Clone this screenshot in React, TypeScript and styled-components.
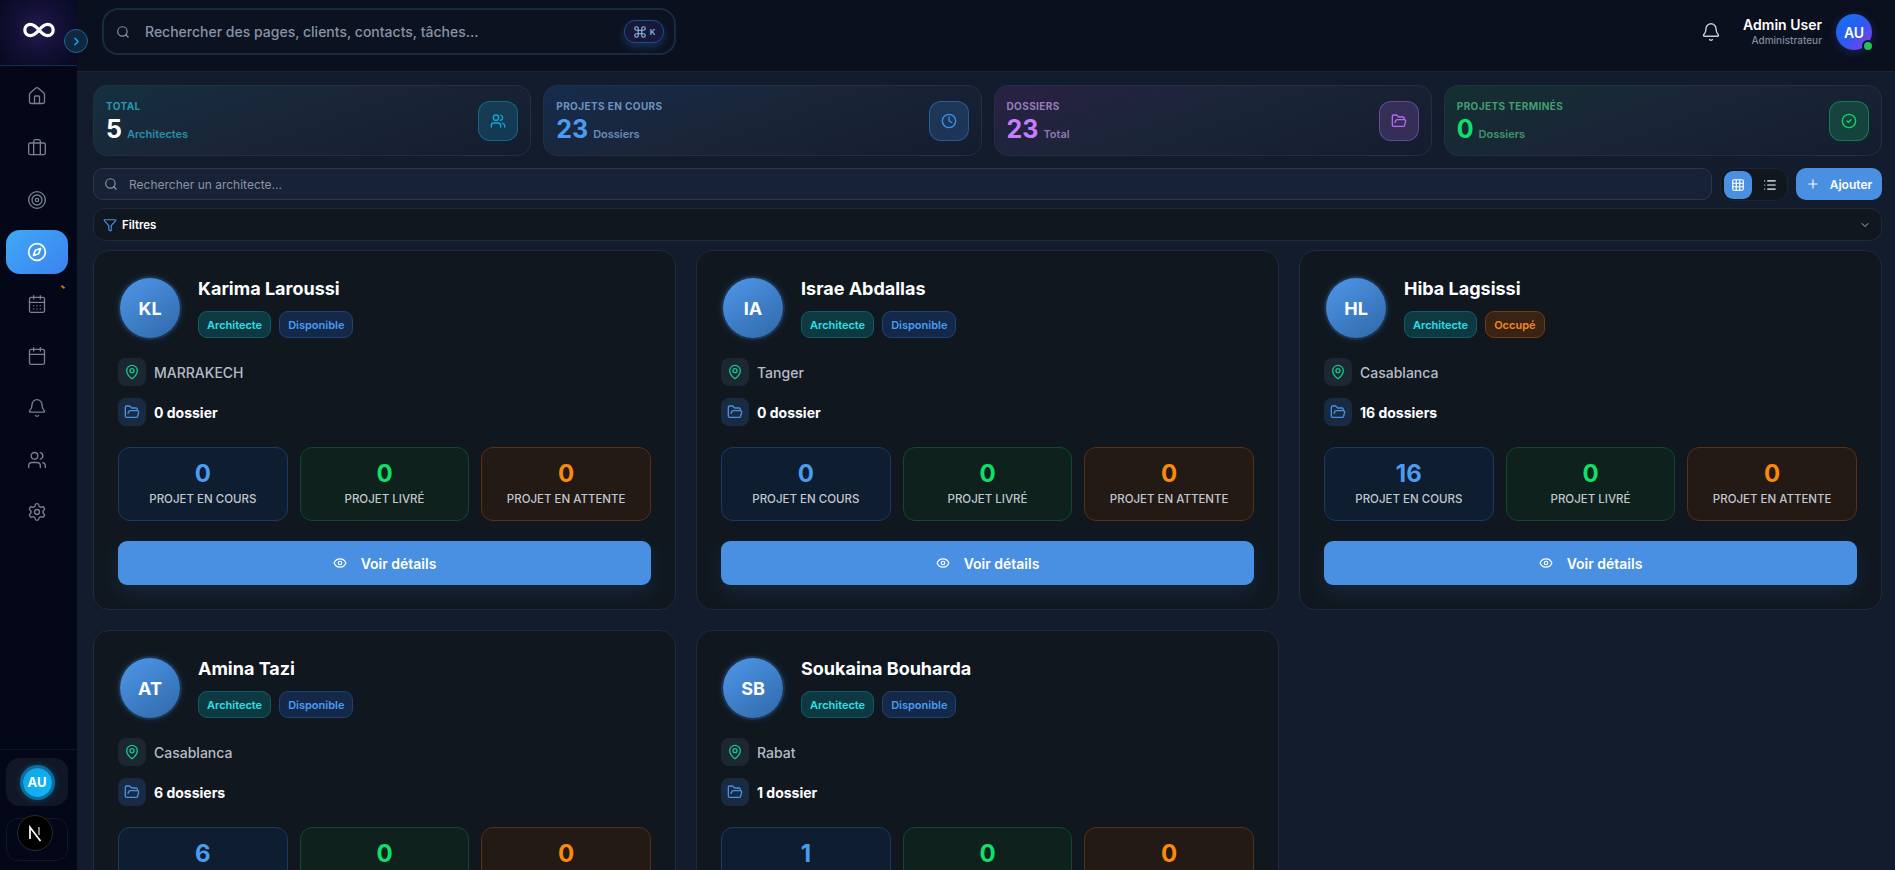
import React from "react";
import styled, { createGlobalStyle } from "styled-components";
import {
  House, Briefcase, Target, Compass, CalendarDays, Calendar, Bell, Users, Settings, Search,
  Command, Funnel, ChevronDown, ChevronRight, Grid3x3, List, Plus, Eye, MapPin, FolderOpen,
  Clock, CircleCheck, Infinity as InfinityIcon,
} from "lucide-react";

const Global = createGlobalStyle`
  html, body { margin: 0; padding: 0; height: 100%; overflow: hidden; background: #121c2c; }
  body { font-family: Inter, "Liberation Sans", sans-serif; color: #fff; }
  * { box-sizing: border-box; }
`;

const Shell = styled.div`
  position: relative;
  display: flex;
  width: 100vw;
  height: 100vh;
  overflow: hidden;
`;

const Side = styled.aside`
  width: 77px;
  flex: none;
  display: flex;
  flex-direction: column;
  background: #030717;
`;

const LogoArea = styled.div`
  height: 66px;
  flex: none;
  display: flex;
  align-items: center;
  justify-content: center;
  padding-bottom: 6px;
  border-bottom: 1px solid #14304c;
  background: radial-gradient(circle at 50% 45%, #221c4e 0%, #110f33 50%, #060a20 100%);
`;

const Toggle = styled.div`
  position: absolute;
  left: 64px;
  top: 29px;
  width: 24px;
  height: 24px;
  border-radius: 50%;
  display: flex;
  align-items: center;
  justify-content: center;
  color: #12b0f5;
  background: #10283f;
  border: 1px solid #1b6596;
`;

const Nav = styled.nav`
  flex: 1;
  display: flex;
  flex-direction: column;
  padding-top: 8px;
  gap: 8px;
`;

const NavItem = styled.div<{ $active?: boolean }>`
  position: relative;
  height: 44px;
  margin: 0 9px 0 6px;
  display: flex;
  align-items: center;
  justify-content: center;
  border-radius: 14px;
  color: ${(p) => (p.$active ? "#fff" : "#7b808c")};
  background: ${(p) => (p.$active ? "linear-gradient(135deg, #3fa9f5, #3b82f0)" : "transparent")};
`;

const Spark = styled.span`
  position: absolute;
  left: 55px;
  top: 4px;
  width: 4px;
  height: 2px;
  background: #d9730d;
  transform: rotate(40deg);
`;

const SideFoot = styled.div`
  flex: none;
  border-top: 1px solid #0f1626;
  padding: 8px 9px 9px 6px;
  display: flex;
  flex-direction: column;
  gap: 12px;
`;

const UserBox = styled.div`
  height: 48px;
  border-radius: 14px;
  background: #111726;
  display: flex;
  align-items: center;
  justify-content: center;
`;

const UserDot = styled.div`
  width: 29px;
  height: 29px;
  border-radius: 50%;
  background: linear-gradient(135deg, #0ea5e9, #12b5f5);
  box-shadow: 0 0 0 3px #0a6f9e, 0 0 6px 3px rgba(14, 165, 233, 0.3);
  display: flex;
  align-items: center;
  justify-content: center;
  font-size: 13px;
  font-weight: 700;
`;

const NextBox = styled.div`
  position: relative;
  height: 43px;
  border-radius: 12px;
  border: 1px solid #111827;
`;

const NextMark = styled.div`
  position: absolute;
  left: 10px;
  top: -4px;
  width: 36px;
  height: 36px;
  border-radius: 50%;
  background: #000;
  border: 1px solid #2b2b2b;
  display: flex;
  align-items: center;
  justify-content: center;
`;

const Main = styled.div`
  flex: 1;
  min-width: 0;
  display: flex;
  flex-direction: column;
`;

const Top = styled.header`
  height: 72px;
  flex: none;
  display: flex;
  align-items: flex-start;
  justify-content: space-between;
  padding: 8px 23px 0 25px;
  background: #0b101e;
  border-bottom: 1px solid #1b2536;
`;

const GlobalSearch = styled.div`
  width: 574px;
  height: 47px;
  display: flex;
  align-items: center;
  padding: 0 10px 0 12px;
  border-radius: 16px;
  border: 2px solid #1a2b40;
  background: #0c1220;
  color: #8893a5;
`;

const GlobalPlaceholder = styled.span`
  flex: 1;
  margin-left: 15px;
  font-size: 14px;
  font-weight: 500;
`;

const Kbd = styled.div`
  width: 40px;
  height: 23px;
  display: flex;
  align-items: center;
  justify-content: center;
  gap: 3px;
  border-radius: 11px;
  border: 1px solid #1f4a86;
  background: #161a38;
  color: #8fb4e6;
  font-size: 8px;
  font-weight: 600;
  box-shadow: 0 4px 9px rgba(59, 130, 246, 0.28);
`;

const TopRight = styled.div`
  display: flex;
  align-items: center;
  height: 48px;
`;

const BellWrap = styled.div`
  color: #c6ccd6;
  display: flex;
  margin-right: 22px;
`;

const UserText = styled.div`
  display: flex;
  flex-direction: column;
  align-items: flex-end;
  margin: -2px 14px 0 0;
`;

const UserName = styled.div`
  font-size: 14px;
  line-height: 18px;
  font-weight: 600;
`;

const UserRole = styled.div`
  font-size: 10px;
  line-height: 13px;
  font-weight: 500;
  color: #808a9c;
`;

const TopAvatar = styled.div`
  position: relative;
  width: 36px;
  height: 36px;
  border-radius: 50%;
  display: flex;
  align-items: center;
  justify-content: center;
  font-size: 14px;
  font-weight: 600;
  background: linear-gradient(135deg, #1473f0 0%, #2a5cf0 50%, #9333ea 100%);
  box-shadow: 0 2px 10px rgba(59, 80, 240, 0.3);
`;

const OnlineDot = styled.span`
  position: absolute;
  right: -2px;
  bottom: -2px;
  width: 12px;
  height: 12px;
  border-radius: 50%;
  background: #1fbf62;
  border: 2px solid #0b101e;
`;

const Content = styled.main`
  flex: 1;
  min-height: 0;
  overflow: hidden;
  padding: 13px 13px 0 16px;
  background: #121c2c;
`;

const StatRow = styled.section`
  display: grid;
  grid-template-columns: repeat(4, 1fr);
  gap: 12px;
`;

const StatCard = styled.div<{ $tint: string }>`
  height: 71px;
  display: flex;
  align-items: center;
  justify-content: space-between;
  padding: 0 12px 0 12px;
  border-radius: 14px;
  border: 1px solid #232f42;
  background: linear-gradient(160deg, ${(p) => p.$tint} 0%, #1a2538 45%, #141d2f 100%);
`;

const StatText = styled.div`
  padding-top: 3px;
`;

const StatLabel = styled.div<{ $c: string }>`
  font-size: 10px;
  line-height: 12px;
  font-weight: 700;
  letter-spacing: 0.4px;
  text-transform: uppercase;
  color: ${(p) => p.$c};
  opacity: 0.85;
`;

const StatLine = styled.div`
  display: flex;
  align-items: baseline;
  gap: 5px;
  margin-top: 2px;
`;

const StatNum = styled.span<{ $c: string }>`
  font-size: 25px;
  line-height: 30px;
  font-weight: 700;
  color: ${(p) => p.$c};
`;

const StatSub = styled.span<{ $c: string }>`
  font-size: 11px;
  font-weight: 600;
  color: ${(p) => p.$c};
  opacity: 0.8;
`;

const StatIcon = styled.div<{ $c: string }>`
  width: 40px;
  height: 40px;
  display: flex;
  align-items: center;
  justify-content: center;
  border-radius: 12px;
  color: ${(p) => p.$c};
  border: 1px solid ${(p) => p.$c}66;
  background: ${(p) => p.$c}33;
`;

const Toolbar = styled.div`
  display: flex;
  align-items: flex-start;
  gap: 8px;
  margin-top: 12px;
`;

const LocalSearch = styled.div`
  flex: 1;
  height: 32px;
  display: flex;
  align-items: center;
  padding: 0 10px;
  gap: 11px;
  border-radius: 10px;
  border: 1px solid #2b394f;
  background: #172236;
  color: #8b94a5;
  font-size: 12px;
`;

const ViewSwitch = styled.div`
  width: 68px;
  height: 33px;
  display: flex;
  align-items: center;
  gap: 4px;
  padding: 0 3px;
  border-radius: 12px;
  border: 1px solid #1b2533;
  background: #10171f;
`;

const ViewBtn = styled.div<{ $on?: boolean }>`
  width: 30px;
  height: 28px;
  display: flex;
  align-items: center;
  justify-content: center;
  border-radius: 9px;
  color: #fff;
  background: ${(p) => (p.$on ? "#4a90e2" : "transparent")};
`;

const AddBtn = styled.div`
  width: 86px;
  height: 32px;
  display: flex;
  align-items: center;
  justify-content: center;
  gap: 10px;
  border-radius: 10px;
  background: #4a90e2;
  font-size: 12px;
  font-weight: 600;
`;

const FilterBar = styled.div`
  height: 33px;
  margin-top: 7px;
  display: flex;
  align-items: center;
  padding: 0 10px 0 9px;
  gap: 5px;
  border-radius: 12px;
  border: 1px solid #1f2a3a;
  background: #10171f;
  font-size: 11.5px;
  font-weight: 600;
`;

const FilterIcon = styled.span`
  display: flex;
  color: #4a90e2;
`;

const FilterChevron = styled.span`
  display: flex;
  margin-left: auto;
  color: #aab2bf;
`;

const Grid = styled.section`
  display: grid;
  grid-template-columns: repeat(3, 1fr);
  column-gap: 20px;
  row-gap: 20px;
  margin-top: 9px;
`;

const Card = styled.article`
  height: 360px;
  padding: 24px;
  border-radius: 16px;
  border: 1px solid #1f2a3a;
  background: #10171f;
`;

const CardHead = styled.div`
  display: flex;
  gap: 18px;
  height: 62px;
  padding: 3px 0 0 2px;
`;

const Avatar = styled.div`
  width: 60px;
  height: 60px;
  flex: none;
  border-radius: 50%;
  display: flex;
  align-items: center;
  justify-content: center;
  font-size: 18px;
  font-weight: 700;
  background: linear-gradient(145deg, #4f97ea, #2f68a8);
  box-shadow: 0 0 0 2px #1c3350, 0 0 6px 3px rgba(74, 144, 226, 0.12);
`;

const HeadText = styled.div`
  display: flex;
  flex-direction: column;
`;

const Name = styled.h3`
  margin: 0;
  font-size: 18px;
  line-height: 22px;
  font-weight: 700;
`;

const Badges = styled.div`
  display: flex;
  gap: 8px;
  margin-top: 11px;
`;

const Badge = styled.span<{ $fg: string; $bg: string; $bd: string }>`
  height: 27px;
  display: inline-flex;
  align-items: center;
  padding: 0 8px;
  border-radius: 9px;
  font-size: 11px;
  font-weight: 600;
  color: ${(p) => p.$fg};
  background: ${(p) => p.$bg};
  border: 1px solid ${(p) => p.$bd};
`;

const InfoRows = styled.div`
  display: flex;
  flex-direction: column;
  gap: 12px;
  margin-top: 21px;
`;

const InfoRow = styled.div`
  display: flex;
  align-items: center;
  gap: 8px;
`;

const InfoIcon = styled.div<{ $c: string; $bg: string }>`
  width: 28px;
  height: 28px;
  display: flex;
  align-items: center;
  justify-content: center;
  border-radius: 8px;
  color: ${(p) => p.$c};
  background: ${(p) => p.$bg};
`;

const InfoText = styled.span<{ $strong?: boolean }>`
  font-size: 14px;
  font-weight: ${(p) => (p.$strong ? 700 : 500)};
  color: ${(p) => (p.$strong ? "#fff" : "#b6bcc7")};
`;

const Tiles = styled.div`
  display: grid;
  grid-template-columns: repeat(3, 1fr);
  gap: 12px;
  margin-top: 21px;
`;

const Tile = styled.div<{ $bd: string; $bg: string }>`
  height: 74px;
  display: flex;
  flex-direction: column;
  align-items: center;
  padding-top: 11px;
  border-radius: 12px;
  border: 1px solid ${(p) => p.$bd};
  background: ${(p) => p.$bg};
`;

const TileNum = styled.div<{ $c: string }>`
  font-size: 24px;
  line-height: 30px;
  font-weight: 700;
  color: ${(p) => p.$c};
`;

const TileLabel = styled.div`
  margin-top: 3px;
  font-size: 11.5px;
  line-height: 14px;
  font-weight: 500;
  color: #c2c7cf;
`;

const Detail = styled.div`
  height: 44px;
  margin-top: 20px;
  display: flex;
  align-items: center;
  justify-content: center;
  gap: 14px;
  border-radius: 9px;
  background: #4a90e2;
  font-size: 14px;
  font-weight: 600;
  box-shadow: 0 8px 20px rgba(74, 144, 226, 0.14);
`;

const navIcons = [House, Briefcase, Target, Compass, CalendarDays, Calendar, Bell, Users, Settings];

const stats = [
  { label: "Total", num: "5", sub: "Architectes", c: "#2fa8c4", numC: "#ffffff", tint: "#14303f", ic: "#10a8d8", Icon: Users },
  { label: "Projets en cours", num: "23", sub: "Dossiers", c: "#7ba6d8", numC: "#4b9cf0", tint: "#152c4d", ic: "#3b93ea", Icon: Clock },
  { label: "Dossiers", num: "23", sub: "Total", c: "#a98fd0", numC: "#c77dff", tint: "#2a2143", ic: "#b56cf0", Icon: FolderOpen },
  { label: "Projets terminés", num: "0", sub: "Dossiers", c: "#4cb27c", numC: "#0ee06b", tint: "#143030", ic: "#12d468", Icon: CircleCheck },
];

const people = [
  { ini: "KL", name: "Karima Laroussi", status: "Disponible", city: "MARRAKECH", dossiers: "0 dossier", n: 0 },
  { ini: "IA", name: "Israe Abdallas", status: "Disponible", city: "Tanger", dossiers: "0 dossier", n: 0 },
  { ini: "HL", name: "Hiba Lagsissi", status: "Occupé", city: "Casablanca", dossiers: "16 dossiers", n: 16 },
  { ini: "AT", name: "Amina Tazi", status: "Disponible", city: "Casablanca", dossiers: "6 dossiers", n: 6 },
  { ini: "SB", name: "Soukaina Bouharda", status: "Disponible", city: "Rabat", dossiers: "1 dossier", n: 1 },
];

export default function App() {
  return (
    <Shell>
      <Global />
      <Side>
        <LogoArea>
          <InfinityIcon size={34} color="#fff" strokeWidth={2.3} />
        </LogoArea>
        <Nav>
          {navIcons.map((I, i) => (
            <NavItem key={i} $active={i === 3}>
              <I size={20} strokeWidth={i === 3 ? 2 : 1.6} />
              {i === 4 && <Spark />}
            </NavItem>
          ))}
        </Nav>
        <SideFoot>
          <UserBox>
            <UserDot>AU</UserDot>
          </UserBox>
          <NextBox>
            <NextMark>
              <svg width="18" height="18" viewBox="0 0 18 18" fill="none" aria-hidden="true">
                <path d="M4 15V3.2L14.5 17" stroke="#fff" strokeWidth="1.7" />
                <path d="M13 3v8" stroke="#9a9a9a" strokeWidth="1.7" />
              </svg>
            </NextMark>
          </NextBox>
        </SideFoot>
      </Side>
      <Toggle>
        <ChevronRight size={13} strokeWidth={2.4} />
      </Toggle>
      <Main>
        <Top>
          <GlobalSearch>
            <Search size={14} />
            <GlobalPlaceholder>Rechercher des pages, clients, contacts, tâches...</GlobalPlaceholder>
            <Kbd>
              <Command size={14} />K
            </Kbd>
          </GlobalSearch>
          <TopRight>
            <BellWrap>
              <Bell size={20} strokeWidth={1.7} />
            </BellWrap>
            <UserText>
              <UserName>Admin User</UserName>
              <UserRole>Administrateur</UserRole>
            </UserText>
            <TopAvatar>
              AU
              <OnlineDot />
            </TopAvatar>
          </TopRight>
        </Top>
        <Content>
          <StatRow>
            {stats.map((s) => (
              <StatCard key={s.label} $tint={s.tint}>
                <StatText>
                  <StatLabel $c={s.c}>{s.label}</StatLabel>
                  <StatLine>
                    <StatNum $c={s.numC}>{s.num}</StatNum>
                    <StatSub $c={s.c}>{s.sub}</StatSub>
                  </StatLine>
                </StatText>
                <StatIcon $c={s.ic}>
                  <s.Icon size={16} />
                </StatIcon>
              </StatCard>
            ))}
          </StatRow>
          <Toolbar>
            <LocalSearch>
              <Search size={14} />
              Rechercher un architecte...
            </LocalSearch>
            <ViewSwitch>
              <ViewBtn $on>
                <Grid3x3 size={14} />
              </ViewBtn>
              <ViewBtn>
                <List size={14} />
              </ViewBtn>
            </ViewSwitch>
            <AddBtn>
              <Plus size={14} />
              Ajouter
            </AddBtn>
          </Toolbar>
          <FilterBar>
            <FilterIcon>
              <Funnel size={14} />
            </FilterIcon>
            Filtres
            <FilterChevron>
              <ChevronDown size={12} />
            </FilterChevron>
          </FilterBar>
          <Grid>
            {people.map((p) => (
              <Card key={p.ini}>
                <CardHead>
                  <Avatar>{p.ini}</Avatar>
                  <HeadText>
                    <Name>{p.name}</Name>
                    <Badges>
                      <Badge $fg="#2fe0e8" $bg="#0d3a42" $bd="#125a64">Architecte</Badge>
                      {p.status === "Occupé" ? (
                        <Badge $fg="#f28a1c" $bg="#3a2312" $bd="#6b3d12">Occupé</Badge>
                      ) : (
                        <Badge $fg="#4b9cf0" $bg="#14294a" $bd="#1f4273">Disponible</Badge>
                      )}
                    </Badges>
                  </HeadText>
                </CardHead>
                <InfoRows>
                  <InfoRow>
                    <InfoIcon $c="#12c98a" $bg="#1c2733">
                      <MapPin size={16} />
                    </InfoIcon>
                    <InfoText>{p.city}</InfoText>
                  </InfoRow>
                  <InfoRow>
                    <InfoIcon $c="#4a90e2" $bg="#192b42">
                      <FolderOpen size={16} />
                    </InfoIcon>
                    <InfoText $strong>{p.dossiers}</InfoText>
                  </InfoRow>
                </InfoRows>
                <Tiles>
                  <Tile $bd="#1c3a63" $bg="#0f1d30">
                    <TileNum $c="#4b9cf0">{p.n}</TileNum>
                    <TileLabel>PROJET EN COURS</TileLabel>
                  </Tile>
                  <Tile $bd="#0f4a2c" $bg="#0f211d">
                    <TileNum $c="#0ee06b">0</TileNum>
                    <TileLabel>PROJET LIVRÉ</TileLabel>
                  </Tile>
                  <Tile $bd="#5a3012" $bg="#231a16">
                    <TileNum $c="#f98a0a">0</TileNum>
                    <TileLabel>PROJET EN ATTENTE</TileLabel>
                  </Tile>
                </Tiles>
                <Detail>
                  <Eye size={14} />
                  Voir détails
                </Detail>
              </Card>
            ))}
          </Grid>
        </Content>
      </Main>
    </Shell>
  );
}
